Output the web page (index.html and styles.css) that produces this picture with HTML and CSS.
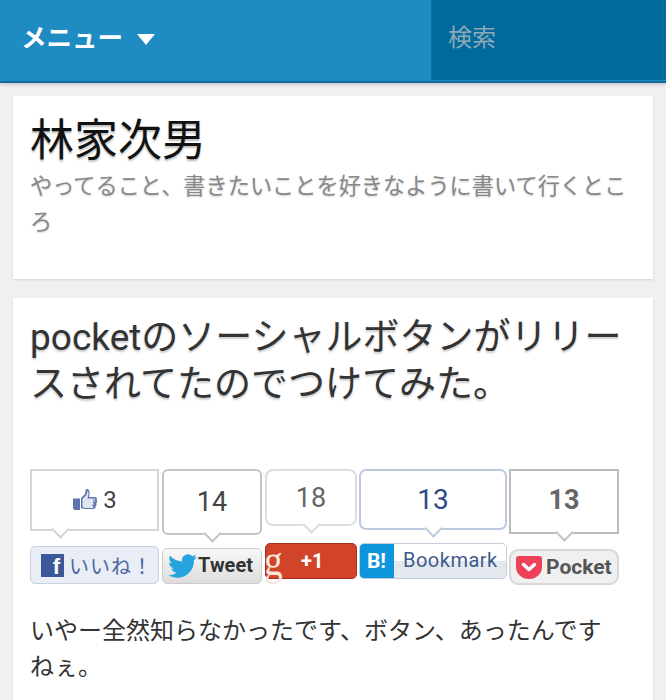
FILE: index.html
```html
<!DOCTYPE html>
<html lang="ja">
<head>
	<meta charset="UTF-8">
	<title>林家次男</title>
	<link rel="stylesheet" href="styles.css">
</head>
<body>
	<div class="page">
		<div class="nav">
			<div class="menu">メニュー<span class="arrow"></span></div>
			<div class="search">検索</div>
		</div>
		<div class="card head-card">
			<h1>林家次男</h1>
			<p class="desc">やってること、書きたいことを好きなように書いて行くところ</p>
		</div>
		<div class="card post">
			<h2>pocketのソーシャルボタンがリリースされてたのでつけてみた。</h2>
			<div class="share">
				<div class="col col-fb">
					<div class="count">
						<svg class="thumb" width="26" height="24" viewBox="0 0 26 24"><path fill="#5b74ad" d="M1 10.500h7V22H3a2 2 0 0 1-2-2z"/><path fill="#5b74ad" d="M9 10l4-4 1-5c3 0 4 2 3.500 4.500L17 9h6c2 0 2.500 2 1.500 3 1 1 .8 2.600-.3 3.300.7 1 .3 2.500-.7 3 .4 1.400-.5 2.700-2 2.700H13c-2 0-3-1-4-1z"/><path fill="#dfe5f1" d="M10.500 11l4-4 1-4c1 .5 1.200 1.500 1 2.500L15.500 10.500H23c.6 0 .6 1 0 1h-2v1h2c.6 0 .6 1 0 1h-2v2h1c.6 0 .6 1 0 1h-1.500v2h.5c.6 0 .6 1.500 0 1.500H13c-1 0-2-.8-2.500-1z"/></svg>3
					</div>
					<div class="btn btn-fb"><span class="fb-logo">f</span>いいね！</div>
				</div>
				<div class="col col-tw">
					<div class="count">14</div>
					<div class="btn btn-tw">
						<svg class="bird" width="29" height="24" viewBox="0 0 24 20"><path fill="#27a4dd" d="M23.953 2.570a10 10 0 0 1-2.825.775 4.958 4.958 0 0 0 2.163-2.723c-.951.555-2.005.959-3.127 1.184a4.920 4.920 0 0 0-8.384 4.482C7.690 6.095 4.067 4.130 1.640 1.162a4.822 4.822 0 0 0-.666 2.475c0 1.710.870 3.213 2.188 4.096a4.904 4.904 0 0 1-2.228-.616v.060a4.923 4.923 0 0 0 3.946 4.827 4.996 4.996 0 0 1-2.212.085 4.936 4.936 0 0 0 4.604 3.417 9.867 9.867 0 0 1-6.102 2.105c-.390 0-.779-.023-1.170-.067a13.995 13.995 0 0 0 7.557 2.209c9.053 0 13.998-7.496 13.998-13.985 0-.210 0-.420-.015-.630A9.935 9.935 0 0 0 24 2.590z"/></svg>Tweet
					</div>
				</div>
				<div class="col col-gp">
					<div class="count">18</div>
					<div class="btn btn-gp"><span class="g-logo">g</span><span class="plus">+1</span></div>
				</div>
				<div class="col col-hb">
					<div class="count">13</div>
					<div class="btn btn-hb"><span class="hb-logo">B!</span><span class="hb-text">Bookmark</span></div>
				</div>
				<div class="col col-pk">
					<div class="count">13</div>
					<div class="btn btn-pk">
						<svg class="pk-logo" width="26" height="23" viewBox="0 0 26 23"><path fill="#ee4056" d="M3 0h20a3 3 0 0 1 3 3v8a13 12 0 0 1-26 0V3a3 3 0 0 1 3-3z"/><path fill="none" stroke="#fff" stroke-width="3.500" stroke-linecap="round" stroke-linejoin="round" d="M7.500 8.500 13 13.500l5.500-5"/></svg>Pocket
					</div>
				</div>
			</div>
			<p class="body-text">いやー全然知らなかったです、ボタン、あったんですねぇ。</p>
		</div>
	</div>
</body>
</html>
```

FILE: styles.css
```css
*{margin: 0;padding: 0;box-sizing: border-box;}
body{
	background: #f0f0f0;
	font-family: Roboto, "Noto Sans CJK JP", sans-serif;
	overflow: hidden;
}
.page{
	height: 700px;
	overflow: hidden;
}
.nav{
	display: flex;
	height: 83px;
	background: #1e8bc3;
	border-bottom: 2px solid #0f6c9a;
	box-shadow: 0 2px 3px rgba(0,0,0,.15);
}
.menu{
	flex: 1;
	padding: 18px 0 0 21px;
	color: #fff;
	font-size: 25.500px;
	font-weight: 700;
	line-height: 40px;
}
.arrow{
	display: inline-block;
	margin-left: 14px;
	vertical-align: 2px;
	border-top: 11px solid #fff;
	border-left: 9px solid transparent;
	border-right: 9px solid transparent;
}
.search{
	width: 235px;
	height: 80px;
	padding: 18px 0 0 16px;
	background: #006a9c;
	border-left: 1px solid #0f6c9a;
	color: #8fa9b8;
	font-size: 24px;
	line-height: 40px;
}
.card{
	margin: 0 13px;
	background: #fff;
	box-shadow: 0 1px 2px rgba(0,0,0,.12);
	padding: 0 17px;
}
.head-card{
	height: 183px;
	margin-top: 13px;
	padding-top: 17px;
}
h1{
	font-size: 44px;
	font-weight: 400;
	line-height: 56px;
	color: #111;
	text-shadow: 0 2px 2px rgba(0,0,0,.25);
}
.desc{
	margin-top: -1px;
	font-size: 22.200px;
	line-height: 36px;
	color: #888;
	text-shadow: 0 1px 2px rgba(0,0,0,.2);
}
.post{
	height: 420px;
	margin-top: 19px;
	padding-top: 16px;
}
h2{
	font-size: 37px;
	font-weight: 400;
	line-height: 47px;
	color: #333;
	text-shadow: 0 2px 2px rgba(0,0,0,.2);
}
.share{
	display: flex;
	margin-top: 61px;
	height: 116px;
}
.col{
	margin-right: 3px;
	flex: none;
}
.count{
	position: relative;
	display: flex;
	align-items: center;
	justify-content: center;
	background: #fff;
	border: 2px solid #c4c4c4;
	border-radius: 4px;
	font-size: 27px;
	color: #444;
}
.count::after{
	content: "";
	position: absolute;
	left: 50%;
	bottom: -7px;
	width: 11px;
	height: 11px;
	margin-left: -6px;
	background: #fff;
	border-right: 2px solid #c4c4c4;
	border-bottom: 2px solid #c4c4c4;
	transform: rotate(45deg);
}
.btn{
	display: flex;
	align-items: center;
	height: 36px;
	border-radius: 5px;
}
.col-fb{width: 129px;}
.col-fb .count{
	height: 62px;
	border-radius: 0;
	border-color: #d4d4d4;
	font-size: 24px;
}
.col-fb .count::after{
	left: 22%;
	border-color: #d4d4d4;
}
.thumb{margin-right: 5px;}
.btn-fb{
	margin-top: 15px;
	height: 38px;
	padding-left: 10px;
	background: #e9edf6;
	border: 1px solid #c6d1e6;
	color: #4c67a1;
	font-size: 20px;
	letter-spacing: 1px;
}
.fb-logo{
	width: 23px;
	height: 23px;
	margin-right: 5px;
	padding: 3px 3px 0 0;
	background: #3b5998;
	color: #fff;
	font: 700 22px/20px "Liberation Sans", sans-serif;
	text-align: right;
}
.col-tw{width: 100px;}
.col-tw .count{
	height: 66px;
	border-radius: 6px;
}
.btn-tw{
	margin-top: 13px;
	padding: 0 0 3px 5px;
	background: linear-gradient(#f8f8f8, #ddd);
	border: 1px solid #ccc;
	color: #333;
	font-size: 20px;
	font-weight: 700;
}
.bird{margin-right: 1px;margin-top: 3px;}
.col-gp{width: 92px;margin-right: 2px;}
.col-gp .count{
	height: 57px;
	border-radius: 8px;
	border-color: #ddd;
	color: #666;
}
.col-gp .count::after{border-color: #ddd;}
.btn-gp{
	margin-top: 17px;
	background: #d2442a;
	border: 1px solid #a5301c;
	color: #fff;
}
.g-logo{
	display: inline-block;
	width: 35px;
	color: #f6e6dc;
	font: 400 34px/26px "Liberation Serif", serif;
	transform: translateX(-2px) scale(1.1, 1.3);
	transform-origin: 0 50%;
}
.plus{
	font-size: 20px;
	font-weight: 700;
}
.col-hb{width: 148px;margin-right: 2px;}
.col-hb .count{
	height: 61px;
	border-radius: 7px;
	border-color: #bccade;
	color: #2f4a84;
	font-size: 28px;
}
.col-hb .count::after{border-color: #bccade;}
.btn-hb{
	margin-top: 13px;
	overflow: hidden;
	background: linear-gradient(#fff 50%, #e4e9f0 50%);
	border: 1px solid #c3cedd;
	color: #3f5a8c;
	font-size: 20px;
}
.hb-logo{
	width: 35px;
	height: 36px;
	margin-left: -1px;
	background: #0d96dc;
	color: #fff;
	font-weight: 700;
	font-size: 21px;
	line-height: 36px;
	text-align: center;
}
.hb-text{margin: 0 0 2px 9px;letter-spacing: .5px;}
.col-pk{width: 110px;margin-right: 0;}
.col-pk .count{
	height: 65px;
	padding-bottom: 4px;
	border-radius: 0;
	border-color: #bbb;
	color: #666;
	font-weight: 700;
}
.btn-pk{
	margin-top: 15px;
	padding-left: 5px;
	border-radius: 9px;
	background: #f0f0f0;
	border: 2px solid #d8d8d8;
	color: #555;
	font-size: 21px;
	font-weight: 700;
}
.pk-logo{margin-right: 4px;}
.body-text{
	margin-top: 28px;
	font-size: 24px;
	line-height: 36px;
	color: #333;
	line-break: strict;
}
```
